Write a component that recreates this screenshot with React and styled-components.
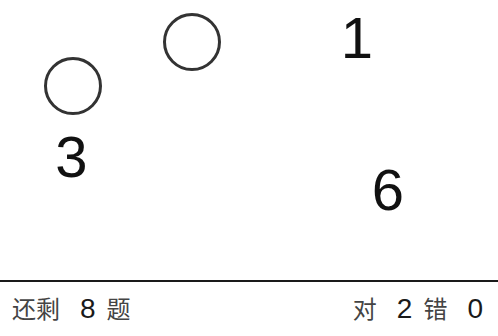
import React from "react";
import styled, { createGlobalStyle } from "styled-components";

const GlobalStyle = createGlobalStyle`
  html, body {
    margin: 0;
    padding: 0;
    background: #fff;
  }
  #root {
    height: 100vh;
  }
`;

// cells on the board: either a shown number or a hidden (circled) one
const cells = [
  { id: "a", x: 191.7, y: 42, hidden: true },
  { id: "b", x: 357, y: 37.7, value: 1 },
  { id: "c", x: 72.5, y: 85.5, hidden: true },
  { id: "d", x: 71.5, y: 157, value: 3 },
  { id: "e", x: 388, y: 190, value: 6 },
];

export default function App() {
  return (
    <>
      <GlobalStyle />
      <Page>
        <Board>
          {cells.map((c) =>
            c.hidden ? (
              <Ring key={c.id} $x={c.x} $y={c.y} />
            ) : (
              <Digit key={c.id} $x={c.x} $y={c.y}>
                {c.value}
              </Digit>
            )
          )}
        </Board>
        <Footer>
          <Group>
            <Label>还剩</Label>
            <Num>8</Num>
            <Label>题</Label>
          </Group>
          <Group>
            <Label>对</Label>
            <Num>2</Num>
            <Label>错</Label>
            <Num>0</Num>
          </Group>
        </Footer>
      </Page>
    </>
  );
}

const Page = styled.div`
  display: flex;
  flex-direction: column;
  height: 100%;
`;

const Board = styled.div`
  position: relative;
  flex: 1;
  overflow: hidden;
`;

const Ring = styled.div`
  position: absolute;
  left: ${(p) => p.$x}px;
  top: ${(p) => p.$y}px;
  width: 58px;
  height: 58px;
  box-sizing: border-box;
  border: 3px solid #333;
  border-radius: 50%;
  transform: translate(-50%, -50%);
`;

const Digit = styled.div`
  position: absolute;
  left: ${(p) => p.$x}px;
  top: ${(p) => p.$y}px;
  font-family: "Liberation Sans", Arial, sans-serif;
  font-size: 58px;
  line-height: 1;
  color: #111;
  transform: translate(-50%, -50%);
`;

const Footer = styled.div`
  flex: 0 0 54px;
  display: flex;
  align-items: center;
  justify-content: space-between;
  border-top: 2px solid #1a1a1a;
  padding: 0 15px 0 12px;
`;

const Group = styled.div`
  display: flex;
  align-items: center;
`;

const Label = styled.span`
  font-family: "Noto Sans CJK SC", "Noto Sans", sans-serif;
  font-size: 24px;
  line-height: 1;
  color: #444;
  margin-bottom: 3px;
`;

const Num = styled.span`
  font-family: "Liberation Sans", Arial, sans-serif;
  font-size: 28px;
  line-height: 1;
  color: #1a1a1a;
  margin: 0 11px 0 20px;

  &:last-child {
    margin-right: 0;
  }
`;
